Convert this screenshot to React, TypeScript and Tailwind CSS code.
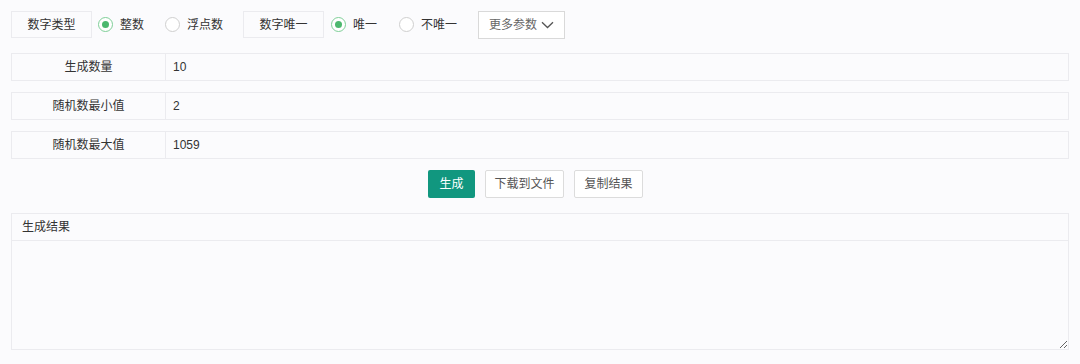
import { useState } from 'react'

const font = { fontFamily: '"Liberation Sans", "Noto Sans CJK SC", sans-serif' }

function Radio({ checked, label, onClick }: { checked: boolean; label: string; onClick: () => void }) {
  return (
    <label className="flex items-center gap-[7px] cursor-pointer" onClick={onClick}>
      <span
        className={
          checked
            ? 'w-[15px] h-[15px] rounded-full border border-[#7fcf98] bg-white flex items-center justify-center'
            : 'w-[15px] h-[15px] rounded-full border border-[#cfcfcf] bg-white'
        }
      >
        {checked && <span className="w-[7px] h-[7px] rounded-full bg-[#4cb86e]" />}
      </span>
      <span>{label}</span>
    </label>
  )
}

function Field({ label, value }: { label: string; value: string }) {
  return (
    <div className="flex h-[28px] border border-[#ebebef] bg-[#fbfbfd]">
      <div className="w-[154px] flex items-center justify-center border-r border-[#ebebef]">{label}</div>
      <div className="flex-1 flex items-center pl-[7px]">{value}</div>
    </div>
  )
}

export default function App() {
  const [intType, setIntType] = useState(true)
  const [unique, setUnique] = useState(true)

  return (
    <div className="min-h-screen w-[1080px] h-[364px] bg-[#fbfbfd] text-[#333] text-[12px] px-[11px] pt-[11px]" style={font}>
      {/* 参数行 */}
      <div className="flex items-center h-[27px]">
        <div className="w-[81px] h-[27px] flex items-center justify-center border border-[#ebebef]">数字类型</div>
        <div className="ml-[6px] flex items-center gap-[21px]">
          <Radio checked={intType} label="整数" onClick={() => setIntType(true)} />
          <Radio checked={!intType} label="浮点数" onClick={() => setIntType(false)} />
        </div>
        <div className="ml-[20px] w-[81px] h-[27px] flex items-center justify-center border border-[#ebebef]">数字唯一</div>
        <div className="ml-[7px] flex items-center gap-[22px]">
          <Radio checked={unique} label="唯一" onClick={() => setUnique(true)} />
          <Radio checked={!unique} label="不唯一" onClick={() => setUnique(false)} />
        </div>
        <button className="ml-[21px] w-[87px] h-[28px] flex items-center justify-center gap-[4px] border border-[#d9d9d9] bg-white text-[#666]">
          更多参数
          <svg width="13" height="8" viewBox="0 0 13 8" fill="none" stroke="#555" strokeWidth="1.3">
            <path d="M1 1.2 6.5 6.5 12 1.2" />
          </svg>
        </button>
      </div>

      <div className="mt-[15px] flex flex-col gap-[11px] w-[1058px]">
        <Field label="生成数量" value="10" />
        <Field label="随机数最小值" value="2" />
        <Field label="随机数最大值" value="1059" />
      </div>

      <div className="mt-[11px] flex justify-center gap-[10px] w-[1058px] pr-[9px]">
        <button className="w-[47px] h-[28px] rounded-[2px] bg-[#11977f] text-white">生成</button>
        <button className="w-[79px] h-[28px] rounded-[2px] border border-[#dcdcdc] bg-white text-[#555]">下载到文件</button>
        <button className="w-[69px] h-[28px] rounded-[2px] border border-[#dcdcdc] bg-white text-[#555]">复制结果</button>
      </div>

      <div className="mt-[15px] w-[1058px] h-[137px] border border-[#ebebef] flex flex-col">
        <div className="h-[27px] flex items-center pl-[10px] border-b border-[#ebebef]">生成结果</div>
        <textarea className="flex-1 w-full bg-[#fbfbfd] outline-none p-[10px]" />
      </div>
    </div>
  )
}
